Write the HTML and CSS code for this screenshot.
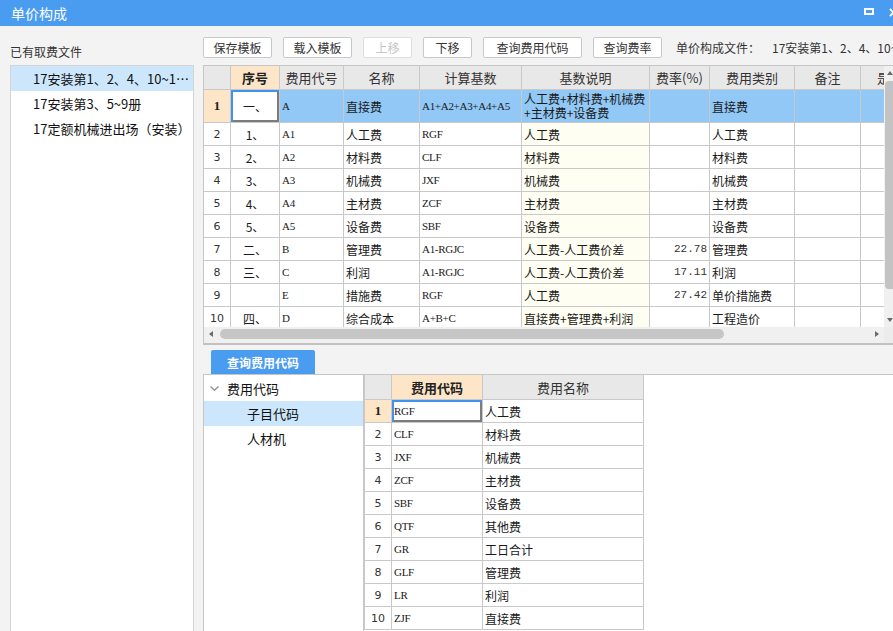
FILE: index.html
```html
<!DOCTYPE html>
<html lang="zh-CN">
<head>
<meta charset="utf-8">
<title>单价构成</title>
<link rel="stylesheet" href="styles.css">
</head>
<body>
<div class="titlebar">
  <span class="title">单价构成</span>
  <div class="win-ctrls">
    <svg class="ic-max" width="10" height="8" viewBox="0 0 10 8"><rect x="1" y="1" width="8" height="5" fill="none" stroke="#fff" stroke-width="2"/></svg>
    <svg class="ic-close" width="9" height="9" viewBox="0 0 9 9"><path d="M1 1 L8 8 M8 1 L1 8" stroke="#fff" stroke-width="1.8"/></svg>
  </div>
</div>
<div class="content">
  <aside class="left">
    <div class="left-label">已有取费文件</div>
    <ul class="file-list">
      <li class="sel">17安装第1、2、4、10~1…</li>
      <li>17安装第3、5~9册</li>
      <li>17定额机械进出场（安装）</li>
    </ul>
  </aside>
  <section class="right">
    <div class="toolbar">
      <button class="btn w69">保存模板</button>
      <button class="btn w69">载入模板</button>
      <button class="btn w49 disabled">上移</button>
      <button class="btn w49">下移</button>
      <button class="btn w99">查询费用代码</button>
      <button class="btn w69">查询费率</button>
      <span class="file-label">单价构成文件：<span class="file-name">17安装第1、2、4、10~11册</span></span>
    </div>
    <div class="grid">
      <div class="grid-body">
        <div class="viewport">
          <div class="main-grid">
            <div class="c hd"></div><div class="c hd key">序号</div><div class="c hd">费用代号</div><div class="c hd">名称</div><div class="c hd">计算基数</div><div class="c hd">基数说明</div><div class="c hd">费率(%)</div><div class="c hd">费用类别</div><div class="c hd">备注</div><div class="c hd last">是</div>

            <div class="c rn cur">1</div><div class="c ctr focus">一、</div><div class="c sel code">A</div><div class="c sel">直接费</div><div class="c sel code">A1+A2+A3+A4+A5</div><div class="c sel wrap">人工费+材料费+机械费<br>+主材费+设备费</div><div class="c sel"></div><div class="c sel">直接费</div><div class="c sel"></div><div class="c sel"></div>

            <div class="c rn">2</div><div class="c ctr">1、</div><div class="c code">A1</div><div class="c">人工费</div><div class="c code">RGF</div><div class="c cream">人工费</div><div class="c"></div><div class="c">人工费</div><div class="c"></div><div class="c"></div>

            <div class="c rn">3</div><div class="c ctr">2、</div><div class="c code">A2</div><div class="c">材料费</div><div class="c code">CLF</div><div class="c cream">材料费</div><div class="c"></div><div class="c">材料费</div><div class="c"></div><div class="c"></div>

            <div class="c rn">4</div><div class="c ctr">3、</div><div class="c code">A3</div><div class="c">机械费</div><div class="c code">JXF</div><div class="c cream">机械费</div><div class="c"></div><div class="c">机械费</div><div class="c"></div><div class="c"></div>

            <div class="c rn">5</div><div class="c ctr">4、</div><div class="c code">A4</div><div class="c">主材费</div><div class="c code">ZCF</div><div class="c cream">主材费</div><div class="c"></div><div class="c">主材费</div><div class="c"></div><div class="c"></div>

            <div class="c rn">6</div><div class="c ctr">5、</div><div class="c code">A5</div><div class="c">设备费</div><div class="c code">SBF</div><div class="c cream">设备费</div><div class="c"></div><div class="c">设备费</div><div class="c"></div><div class="c"></div>

            <div class="c rn">7</div><div class="c ctr">二、</div><div class="c code">B</div><div class="c">管理费</div><div class="c code">A1-RGJC</div><div class="c cream">人工费-人工费价差</div><div class="c num">22.78</div><div class="c">管理费</div><div class="c"></div><div class="c"></div>

            <div class="c rn">8</div><div class="c ctr">三、</div><div class="c code">C</div><div class="c">利润</div><div class="c code">A1-RGJC</div><div class="c cream">人工费-人工费价差</div><div class="c num">17.11</div><div class="c">利润</div><div class="c"></div><div class="c"></div>

            <div class="c rn">9</div><div class="c ctr"></div><div class="c code">E</div><div class="c">措施费</div><div class="c code">RGF</div><div class="c cream">人工费</div><div class="c num">27.42</div><div class="c">单价措施费</div><div class="c"></div><div class="c"></div>

            <div class="c rn">10</div><div class="c ctr">四、</div><div class="c code">D</div><div class="c">综合成本</div><div class="c code">A+B+C</div><div class="c cream">直接费+管理费+利润</div><div class="c"></div><div class="c">工程造价</div><div class="c"></div><div class="c"></div>
          </div>
        </div>
        <div class="vscroll">
          <div class="vs-arrow"><span class="tri-up"></span></div>
          <div class="vs-thumb"></div>
          <div class="vs-space"></div>
          <div class="vs-arrow"><span class="tri-down"></span></div>
        </div>
      </div>
      <div class="hscroll">
        <div class="hs-arrow"><span class="tri-left"></span></div>
        <div class="hs-thumb"></div>
        <div class="hs-space"></div>
        <div class="hs-arrow"><span class="tri-right"></span></div>
        <div class="hs-corner"></div>
      </div>
    </div>
    <div class="tabbar">
      <span class="tab">查询费用代码</span>
    </div>
    <div class="bottom">
      <div class="tree">
        <div class="tree-item root">
          <svg class="chev" width="9" height="5" viewBox="0 0 9 5"><path d="M0.5 0.5 L4.5 4.3 L8.5 0.5" fill="none" stroke="#8a8a8a" stroke-width="1.2"/></svg>
          <span>费用代码</span>
        </div>
        <div class="tree-item child sel">子目代码</div>
        <div class="tree-item child">人材机</div>
      </div>
      <div class="codes">
        <div class="code-grid">
          <div class="c hd"></div><div class="c hd key">费用代码</div><div class="c hd">费用名称</div>
          <div class="c rn cur">1</div><div class="c code focus">RGF</div><div class="c">人工费</div>
          <div class="c rn">2</div><div class="c code">CLF</div><div class="c">材料费</div>
          <div class="c rn">3</div><div class="c code">JXF</div><div class="c">机械费</div>
          <div class="c rn">4</div><div class="c code">ZCF</div><div class="c">主材费</div>
          <div class="c rn">5</div><div class="c code">SBF</div><div class="c">设备费</div>
          <div class="c rn">6</div><div class="c code">QTF</div><div class="c">其他费</div>
          <div class="c rn">7</div><div class="c code">GR</div><div class="c">工日合计</div>
          <div class="c rn">8</div><div class="c code">GLF</div><div class="c">管理费</div>
          <div class="c rn">9</div><div class="c code">LR</div><div class="c">利润</div>
          <div class="c rn">10</div><div class="c code">ZJF</div><div class="c">直接费</div>
        </div>
      </div>
    </div>
  </section>
</div>
</body>
</html>
```

FILE: styles.css
```css
* {
  box-sizing: border-box;
  margin: 0;
  padding: 0;
}

html, body {
  width: 893px;
  height: 631px;
  overflow: hidden;
}

body {
  background: #f3f3f3;
  font-family: "Noto Sans CJK SC", "Noto Sans", sans-serif;
  font-size: 12px;
  color: #222;
}

/* ---------- title bar ---------- */
.titlebar {
  height: 26px;
  background: #4a9cf1;
  color: #fff;
  display: flex;
  align-items: center;
  padding-left: 11px;
  overflow: hidden;
}

.title {
  font-size: 14px;
  line-height: 26px;
  flex: 1;
}

.win-ctrls {
  display: flex;
  align-items: center;
  gap: 15px;
  margin-right: -5px;
}

.ic-max {
  margin-bottom: 3px;
}

.ic-close {
  margin-bottom: 2px;
}

/* ---------- layout ---------- */
.content {
  display: flex;
  height: 605px;
}

.left {
  width: 203px;
  flex: none;
  padding-top: 18px;
  display: flex;
  flex-direction: column;
}

.left-label {
  height: 16px;
  line-height: 16px;
  padding-left: 10px;
  font-size: 12px;
  color: #333;
}

.file-list {
  list-style: none;
  margin: 5px 0 0 10px;
  width: 184px;
  flex: 1;
  background: #fff;
  border: 1px solid #d4d4d4;
  border-bottom: none;
}

.file-list li {
  height: 25px;
  line-height: 25px;
  padding-left: 22px;
  font-size: 13px;
  color: #111;
  white-space: nowrap;
  overflow: hidden;
}

.file-list li.sel {
  background: #cce7fb;
}

.right {
  flex: 1;
  min-width: 0;
  display: flex;
  flex-direction: column;
  padding-top: 11px;
}

/* ---------- toolbar ---------- */
.toolbar {
  height: 21px;
  display: flex;
  align-items: center;
  gap: 11px;
  margin-bottom: 7px;
  white-space: nowrap;
  overflow: hidden;
}

.btn {
  height: 21px;
  flex: none;
  border: 1px solid #c9c9c9;
  border-radius: 2px;
  background: #fff;
  font-family: inherit;
  font-size: 12px;
  color: #333;
  display: flex;
  align-items: center;
  justify-content: center;
}

.w49 { width: 49px; }
.w69 { width: 69px; }
.w99 { width: 99px; }

.btn.disabled {
  color: #c6c6c6;
  border-color: #dedede;
}

.file-label {
  margin-left: 3px;
  font-size: 12px;
  color: #333;
}

.file-name {
  margin-left: 12px;
}

/* ---------- main grid ---------- */
.grid {
  height: 280px;
  flex: none;
  border-top: 1px solid #c6c6c6;
  border-left: 1px solid #c6c6c6;
  border-bottom: 2px solid #c2c2c2;
  display: flex;
  flex-direction: column;
  background: #fff;
}

.grid-body {
  height: 261px;
  display: flex;
}

.viewport {
  flex: 1;
  overflow: hidden;
  background: #fff;
}

.main-grid {
  display: grid;
  grid-template-columns: 26px 48px 63px 75px 101px 127px 59px 84px 65px 84px;
  grid-template-rows: 23px 32px repeat(9, 22px);
  gap: 1px;
  width: max-content;
  background: #c9c9c9;
}

.c {
  background: #fff;
  display: flex;
  align-items: center;
  padding-left: 2px;
  white-space: nowrap;
  overflow: hidden;
  font-size: 12px;
  color: #1a1a1a;
}

.c.hd {
  background: #e8e8e8;
  justify-content: center;
  padding-left: 0;
  font-size: 13px;
  color: #333;
}

.c.hd.key {
  background: #fde6c7;
  font-weight: bold;
  color: #222;
}

.c.hd.last {
  justify-content: flex-start;
  padding-left: 16px;
}

.c.rn {
  justify-content: center;
  padding-left: 0;
  font-family: "DejaVu Sans", "Liberation Sans", sans-serif;
  font-size: 11px;
  color: #333;
}

.c.rn.cur {
  background: #fde6c7;
  font-family: "Liberation Serif", serif;
  font-weight: bold;
  font-size: 13px;
  color: #222;
}

.c.ctr {
  justify-content: center;
  padding-left: 0;
}

.c.code {
  font-family: "Liberation Serif", "Noto Sans CJK SC", serif;
  font-size: 11px;
  letter-spacing: -0.3px;
}

.c.num {
  justify-content: flex-end;
  padding-left: 0;
  padding-right: 2px;
  font-family: "Liberation Mono", monospace;
  font-size: 11px;
  color: #333;
}

.c.cream {
  background: #fffef2;
}

.c.sel {
  background: #91c8f6;
}

.c.wrap {
  white-space: normal;
  line-height: 14px;
}

.c.focus {
  background: #fff;
  box-shadow: inset 2px 2px 0 #3f93ee, inset -2px -2px 0 #7c7c7c;
}

/* ---------- scrollbars ---------- */
.vscroll {
  width: 9px;
  flex: none;
  background: #f0f0f0;
  display: flex;
  flex-direction: column;
}

.vs-arrow {
  height: 14px;
  display: flex;
  align-items: center;
  padding-left: 3px;
}

.vs-thumb {
  margin-top: 1px;
  height: 208px;
  margin-left: 1px;
  background: #c3c3c3;
  border-radius: 4px 0 0 4px;
}

.vs-space {
  flex: 1;
}

.tri-up {
  width: 0;
  height: 0;
  border-left: 3px solid transparent;
  border-right: 3px solid transparent;
  border-bottom: 4px solid #6a6a6a;
}

.tri-down {
  width: 0;
  height: 0;
  border-left: 3px solid transparent;
  border-right: 3px solid transparent;
  border-top: 4px solid #6a6a6a;
}

.hscroll {
  height: 16px;
  flex: none;
  background: #f0f0f0;
  display: flex;
  align-items: flex-start;
}

.hs-arrow {
  width: 14px;
  height: 14px;
  display: flex;
  align-items: center;
  justify-content: center;
  flex: none;
}

.hs-thumb {
  margin-top: 2px;
  margin-left: 2px;
  width: 504px;
  height: 10px;
  background: #c6c6c6;
  border-radius: 5px;
  flex: none;
}

.hs-space {
  flex: 1;
}

.hs-corner {
  width: 9px;
  height: 16px;
  flex: none;
  background: #ececec;
}

.tri-left {
  width: 0;
  height: 0;
  border-top: 3px solid transparent;
  border-bottom: 3px solid transparent;
  border-right: 4px solid #6a6a6a;
}

.tri-right {
  width: 0;
  height: 0;
  border-top: 3px solid transparent;
  border-bottom: 3px solid transparent;
  border-left: 4px solid #6a6a6a;
}

/* ---------- tab ---------- */
.tabbar {
  height: 29px;
  flex: none;
  padding: 5px 0 0 8px;
  display: flex;
}

.tab {
  width: 104px;
  height: 24px;
  background: #4a9cf1;
  border-radius: 2px 2px 0 0;
  color: #fff;
  font-weight: bold;
  font-size: 12px;
  display: flex;
  align-items: center;
  justify-content: center;
}

/* ---------- bottom panel ---------- */
.bottom {
  flex: 1;
  display: flex;
  align-items: flex-start;
  background: #fff;
  border-top: 1px solid #c6c6c6;
  border-left: 1px solid #c6c6c6;
  min-height: 0;
}

.tree {
  width: 159px;
  flex: none;
  padding-top: 1px;
}

.tree-item {
  height: 25px;
  display: flex;
  align-items: center;
  font-size: 13px;
  color: #111;
}

.tree-item.root {
  padding-left: 6px;
  gap: 8px;
}

.tree-item.child {
  padding-left: 43px;
}

.tree-item.sel {
  background: #cce7fb;
}

.codes {
  align-self: stretch;
  border-left: 1px solid #c6c6c6;
}

.code-grid {
  display: grid;
  grid-template-columns: 26px 90px 160px;
  grid-template-rows: 24px repeat(10, 22px);
  gap: 1px;
  padding: 0 1px 1px 1px;
  background: #c9c9c9;
  width: max-content;
}
```
